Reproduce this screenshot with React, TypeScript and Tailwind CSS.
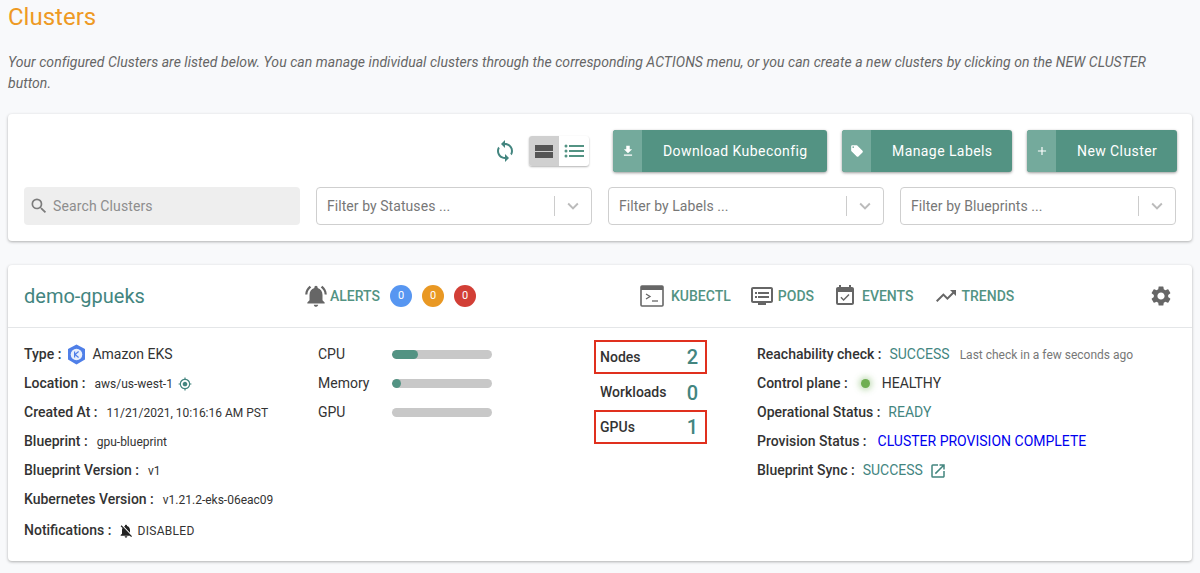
import React from 'react';
import {
  MdAdd,
  MdDvr,
  MdEventAvailable,
  MdFileDownload,
  MdGpsFixed,
  MdKeyboardArrowDown,
  MdLocalOffer,
  MdNotificationsActive,
  MdNotificationsOff,
  MdOpenInNew,
  MdSearch,
  MdSettings,
  MdSync,
  MdTrendingUp,
} from 'react-icons/md';

const ActionButton: React.FC<{ icon: React.ReactNode; label: string; width: string }> = ({ icon, label, width }) => (
  <button className={`flex h-[42px] items-stretch overflow-hidden rounded-[3px] bg-[#539383] text-white shadow-[0_1px_3px_rgba(0,0,0,0.4)] ${width}`}>
    <span className="flex w-[29px] shrink-0 items-center justify-center bg-[#74aa9c] text-white">{icon}</span>
    <span className="flex flex-1 items-center pl-[21px] text-[14px] tracking-[0.42px]">{label}</span>
  </button>
);

const FilterSelect: React.FC<{ placeholder: string }> = ({ placeholder }) => (
  <div className="flex h-[38px] w-[276px] items-center rounded-[4px] border border-[#cfcfcf] bg-white pl-[10px] text-[14px] tracking-[0.06px] text-[#777777]">
    <span className="flex-1">{placeholder}</span>
    <span className="h-[20px] w-px bg-[#cccccc]" />
    <span className="flex w-[36px] justify-center text-[#bbbbbb]">
      <MdKeyboardArrowDown size={22} />
    </span>
  </div>
);

const HeaderLink: React.FC<{ icon: React.ReactNode; label: string; className: string }> = ({ icon, label, className }) => (
  <div className={`flex items-center gap-[6px] ${className}`}>
    <span className="flex text-[#666666]">{icon}</span>
    <span className="text-[14px] font-medium text-[#539383]">{label}</span>
  </div>
);

const Count: React.FC<{ value: number; color: string }> = ({ value, color }) => (
  <span className={`flex h-[22px] w-[22px] items-center justify-center rounded-full text-[11px] text-white ${color}`}>{value}</span>
);

const InfoRow: React.FC<{ label: string; children: React.ReactNode; className?: string }> = ({ label, children, className = '' }) => (
  <div className={`flex h-[29px] items-center whitespace-nowrap ${className}`}>
    <span className="text-[14px] font-medium text-[#333333]">{label}</span>
    {children}
  </div>
);

const Usage: React.FC<{ label: string; percent: number }> = ({ label, percent }) => (
  <div className="flex h-[29px] items-center">
    <span className="w-[74px] text-[14px] text-[#333333]">{label}</span>
    <div className="h-[9px] w-[100px] overflow-hidden rounded-full bg-[#c8c8c8]">
      <div className="h-full rounded-full bg-[#539383]" style={{ width: `${percent}%` }} />
    </div>
  </div>
);

const Metric: React.FC<{ label: string; value: number; boxed?: boolean }> = ({ label, value, boxed }) => (
  <div className={`flex h-[35px] w-[113px] items-center justify-between pr-[9px] ${boxed ? 'border-[2px] border-[#e0301e] pl-[4px] !pr-[7px] !h-[34px] mb-[1px]' : 'pl-[6px]'}`}>
    <span className="text-[14px] font-medium text-[#333333]">{label}</span>
    <span className="text-[20px] font-medium text-[#43857f]">{value}</span>
  </div>
);

const KubeIcon = () => (
  <svg width="19" height="21" viewBox="0 0 19 21" className="mx-[6px]">
    <path d="M9.5 0.5 L18 5 V15.5 L9.5 20.5 L1 15.5 V5 Z" fill="#4f7fe8" />
    <circle cx="9.5" cy="10.5" r="5.8" fill="#e8effc" />
    <path d="M7.6 7.5 V13.5 M11.6 7.5 L8 10.5 L11.6 13.5" stroke="#4f7fe8" strokeWidth="1.2" fill="none" />
  </svg>
);

const TerminalIcon = () => (
  <svg width="24" height="22" viewBox="0 0 24 22">
    <rect x="1" y="1" width="22" height="20" rx="1" fill="none" stroke="#666666" strokeWidth="1.6" />
    <rect x="1" y="1" width="22" height="4" fill="#666666" />
    <path d="M6 9 L10 11.5 L6 14" fill="none" stroke="#666666" strokeWidth="1.3" />
    <path d="M12 16 H18" stroke="#666666" strokeWidth="1.3" />
  </svg>
);

const ListIcon = () => (
  <svg width="20" height="14" viewBox="0 0 20 14" fill="#539383">
    <circle cx="2" cy="2" r="1.5" />
    <circle cx="2" cy="7" r="1.5" />
    <circle cx="2" cy="12" r="1.5" />
    <rect x="5" y="1" width="15" height="2" />
    <rect x="5" y="6" width="15" height="2" />
    <rect x="5" y="11" width="15" height="2" />
  </svg>
);

export default function App() {
  return (
    <div className="h-[573px] overflow-hidden bg-[#f8f9fb] px-2 font-['Roboto',sans-serif]">
      <h1 className="pt-[2px] text-[24px] leading-[30px] text-[#ee9a24]">Clusters</h1>
      <p className="mt-[20px] h-[42px] text-[14px] italic leading-[21px] tracking-[0.045px] text-[#666666]">
        Your configured Clusters are listed below. You can manage individual clusters through the corresponding ACTIONS menu, or you can create a new clusters by clicking on the NEW CLUSTER button.
      </p>

      <section className="mt-[20px] h-[127px] rounded-[4px] bg-white pl-4 pr-[15px] pt-4 shadow-[0_1px_3px_rgba(0,0,0,0.3)]">
        <div className="flex h-[42px] items-center justify-end gap-[15px]">
          <div className="mr-[9px] flex items-center gap-[12px]">
            <MdSync size={24} className="text-[#43857f]" />
            <div className="flex h-[30px] overflow-hidden rounded-[3px] bg-white shadow-[0_1px_2px_rgba(0,0,0,0.3)]">
              <span className="flex w-[30px] items-center justify-center bg-[#d0d0d0]">
                <span className="flex w-[18px] flex-col gap-[1px]">
                  <span className="h-[6px] bg-[#555555]" />
                  <span className="h-[6px] bg-[#555555]" />
                </span>
              </span>
              <span className="flex w-[30px] items-center justify-center">
                <ListIcon />
              </span>
            </div>
          </div>
          <ActionButton icon={<MdFileDownload size={14} />} label="Download Kubeconfig" width="w-[214px]" />
          <ActionButton icon={<MdLocalOffer size={14} />} label="Manage Labels" width="w-[170px]" />
          <ActionButton icon={<MdAdd size={14} />} label="New Cluster" width="w-[150px]" />
        </div>
        <div className="mr-px mt-[15px] flex items-center justify-between">
          <div className="flex h-[38px] w-[276px] items-center rounded-[4px] bg-[#eeeeee] pl-[5px] text-[14px] tracking-[0.12px] text-[#8d8d8d]">
            <MdSearch size={20} className="text-[#7c7c7c]" />
            <span className="ml-[4px]">Search Clusters</span>
          </div>
          <FilterSelect placeholder="Filter by Statuses ..." />
          <FilterSelect placeholder="Filter by Labels ..." />
          <FilterSelect placeholder="Filter by Blueprints ..." />
        </div>
      </section>

      <section className="mt-[24px] h-[296px] rounded-[4px] bg-white shadow-[0_1px_3px_rgba(0,0,0,0.3)]">
        <header className="flex h-[63px] items-center border-b border-[#e4e6e8] pl-4 pr-[19px]">
          <h2 className="w-[279px] text-[20px] text-[#43857f]">demo-gpueks</h2>
          <div className="flex items-center">
            <MdNotificationsActive size={26} className="text-[#666666]" />
            <span className="ml-[1px] text-[14px] font-medium text-[#539383]">ALERTS</span>
            <div className="ml-[10px] flex gap-[10px]">
              <Count value={0} color="bg-[#5796f1]" />
              <Count value={0} color="bg-[#e99823]" />
              <Count value={0} color="bg-[#d23f36]" />
            </div>
          </div>
          <HeaderLink icon={<TerminalIcon />} label="KUBECTL" className="ml-[164px] !gap-[7px]" />
          <HeaderLink icon={<MdDvr size={24} />} label="PODS" className="ml-[19px] !gap-[4px]" />
          <HeaderLink icon={<MdEventAvailable size={24} />} label="EVENTS" className="ml-[19px] !gap-[5px]" />
          <HeaderLink icon={<MdTrendingUp size={24} />} label="TRENDS" className="ml-[20px] !gap-[4px]" />
          <MdSettings size={24} className="ml-auto text-[#666666]" />
        </header>

        <div className="flex pl-4 pt-[12px]">
          <div className="w-[294px]">
            <InfoRow label="Type :">
              <KubeIcon />
              <span className="text-[14px] text-[#333333]">Amazon EKS</span>
            </InfoRow>
            <InfoRow label="Location :">
              <span className="ml-[9px] text-[12px] text-[#333333]">aws/us-west-1</span>
              <MdGpsFixed size={14} className="ml-[5px] text-[#43857f]" />
            </InfoRow>
            <InfoRow label="Created At :">
              <span className="ml-[9px] text-[12px] text-[#333333]">11/21/2021, 10:16:16 AM PST</span>
            </InfoRow>
            <InfoRow label="Blueprint :">
              <span className="ml-[9px] text-[12px] text-[#333333]">gpu-blueprint</span>
            </InfoRow>
            <InfoRow label="Blueprint Version :">
              <span className="ml-[9px] text-[12px] text-[#333333]">v1</span>
            </InfoRow>
            <InfoRow label="Kubernetes Version :">
              <span className="ml-[9px] text-[12px] text-[#333333]">v1.21.2-eks-06eac09</span>
            </InfoRow>
            <InfoRow label="Notifications :" className="mt-[2px]">
              <MdNotificationsOff size={16} className="ml-[6px] text-[#222222]" />
              <span className="ml-[4px] text-[12px] tracking-[0.3px] text-[#333333]">DISABLED</span>
            </InfoRow>
          </div>

          <div className="w-[276px]">
            <Usage label="CPU" percent={26} />
            <Usage label="Memory" percent={9} />
            <Usage label="GPU" percent={0} />
          </div>

          <div className="w-[163px]">
            <Metric label="Nodes" value={2} boxed />
            <Metric label="Workloads" value={0} />
            <Metric label="GPUs" value={1} boxed />
          </div>

          <div>
            <InfoRow label="Reachability check :">
              <span className="ml-[8px] text-[14px] text-[#43857f]">SUCCESS</span>
              <span className="ml-[10px] text-[12px] text-[#777777]">Last check in a few seconds ago</span>
            </InfoRow>
            <InfoRow label="Control plane :">
              <span className="ml-[13px] h-[9px] w-[9px] rounded-full bg-[#6fae52] shadow-[0_0_6px_2px_rgba(111,174,82,0.45)]" />
              <span className="ml-[12px] text-[14px] text-[#333333]">HEALTHY</span>
            </InfoRow>
            <InfoRow label="Operational Status :">
              <span className="ml-[8px] text-[14px] text-[#43857f]">READY</span>
            </InfoRow>
            <InfoRow label="Provision Status :">
              <span className="ml-[11px] text-[14px] text-[#0000ee]">CLUSTER PROVISION COMPLETE</span>
            </InfoRow>
            <InfoRow label="Blueprint Sync :">
              <span className="ml-[8px] text-[14px] text-[#43857f]">SUCCESS</span>
              <MdOpenInNew size={18} className="ml-[6px] text-[#43857f]" />
            </InfoRow>
          </div>
        </div>
      </section>
    </div>
  );
}
